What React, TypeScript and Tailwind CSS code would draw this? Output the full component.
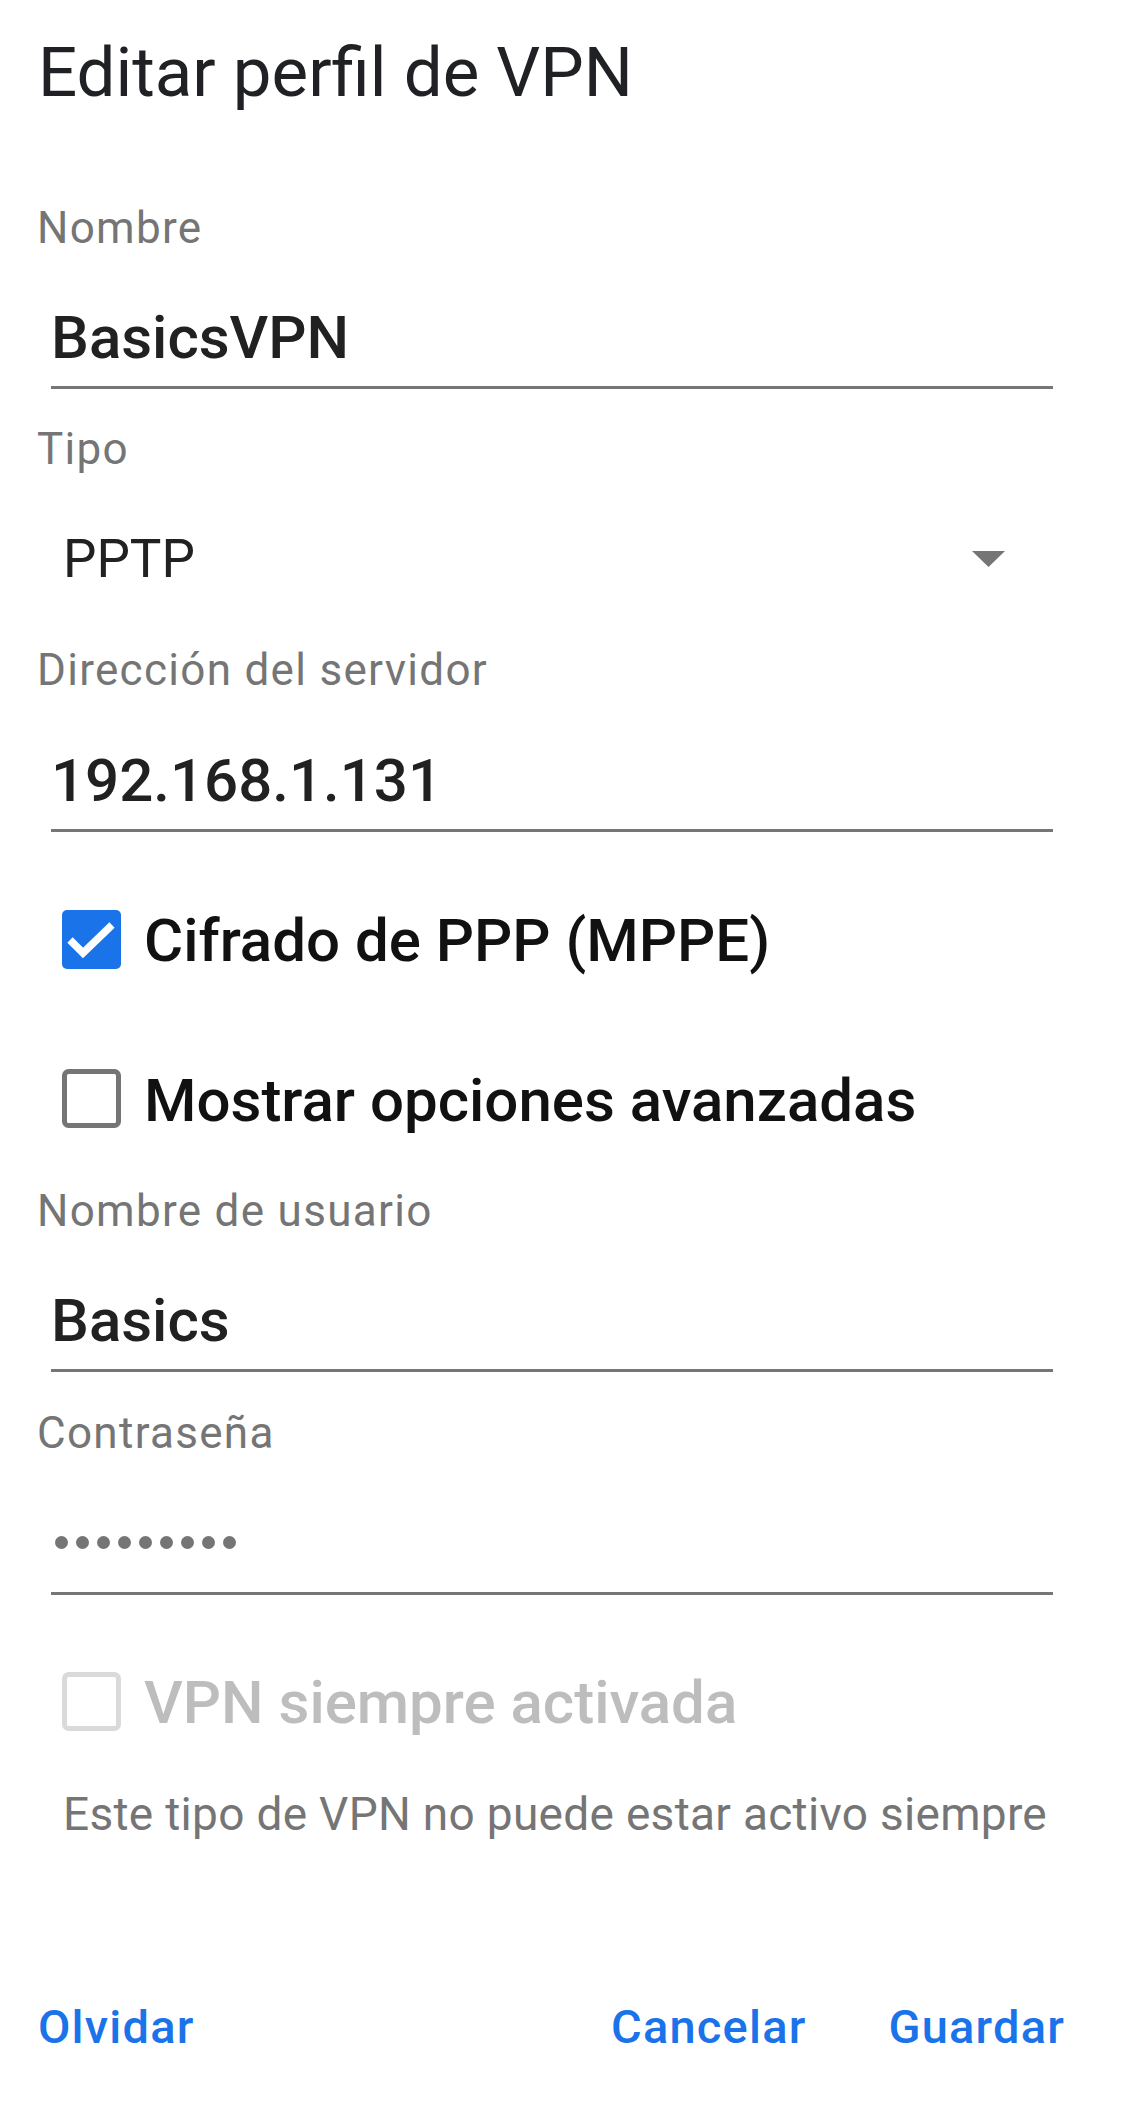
import React from "react";

const font = { fontFamily: "Roboto, 'Noto Sans', Arial, sans-serif" };

function Label({ text, mt }: { text: string; mt: string }) {
  return (
    <div className={`${mt} h-[50px] leading-[50px] pl-[37px] text-[44px] tracking-[1.3px] text-[#757575] whitespace-nowrap`}>
      {text}
    </div>
  );
}

function Field({ value, mt }: { value: string; mt: string }) {
  return (
    <div className={`${mt} ml-[51px] mr-[69px]`}>
      <div className="h-[66px] leading-[66px] text-[60px] font-medium text-[#212121] whitespace-nowrap">{value}</div>
      <div className="mt-[15px] h-[3px] bg-[#767676]" />
    </div>
  );
}

function CheckedBox() {
  return (
    <svg width="59" height="59" viewBox="0 0 59 59" className="shrink-0">
      <rect x="0" y="0" width="59" height="59" rx="5" fill="#1a73e8" />
      <polyline points="8,30 21,43 50,15" fill="none" stroke="#ffffff" strokeWidth="7.5" strokeLinecap="butt" strokeLinejoin="miter" />
    </svg>
  );
}

function EmptyBox({ color }: { color: string }) {
  return (
    <svg width="59" height="59" viewBox="0 0 59 59" className="shrink-0">
      <rect x="2.5" y="2.5" width="54" height="54" rx="4" fill="none" stroke={color} strokeWidth="5" />
    </svg>
  );
}

export default function App() {
  return (
    <div className="w-[1122px] h-[2114px] bg-white overflow-hidden" style={font}>
      <div className="mt-[33px] h-[80px] leading-[80px] pl-[38px] text-[69px] text-[#202124] whitespace-nowrap">
        Editar perfil de VPN
      </div>

      <Label text="Nombre" mt="mt-[90px]" />
      <Field value="BasicsVPN" mt="mt-[52px]" />

      <Label text="Tipo" mt="mt-[35px]" />
      <div className="mt-[55px] h-[60px] flex items-center pl-[63px] pr-[117px]">
        <div className="flex-1 leading-[60px] text-[53px] text-[#212121]">PPTP</div>
        <svg width="33" height="16" viewBox="0 0 33 16">
          <polygon points="0,0 33,0 16.5,16" fill="#757575" />
        </svg>
      </div>

      <Label text="Dirección del servidor" mt="mt-[56px]" />
      <Field value="192.168.1.131" mt="mt-[53px]" />

      <div className="mt-[77px] h-[60px] flex items-center pl-[62px] gap-[23px]">
        <CheckedBox />
        <div className="leading-[60px] pt-[4px] text-[60px] font-medium text-[#111111] whitespace-nowrap">
          Cifrado de PPP (MPPE)
        </div>
      </div>

      <div className="mt-[100px] h-[59px] flex items-center pl-[62px] gap-[23px]">
        <EmptyBox color="#757575" />
        <div className="leading-[59px] pt-[4px] text-[60px] font-medium text-[#111111] whitespace-nowrap">
          Mostrar opciones avanzadas
        </div>
      </div>

      <Label text="Nombre de usuario" mt="mt-[58px]" />
      <Field value="Basics" mt="mt-[52px]" />

      <Label text="Contraseña" mt="mt-[36px]" />
      <div className="mt-[51px] ml-[51px] mr-[69px]">
        <div className="h-[66px] flex items-center gap-[8px] pl-[4px]">
          {Array.from({ length: 9 }).map((_, i) => (
            <span key={i} className="block w-[13px] h-[13px] rounded-full bg-[#757575]" />
          ))}
        </div>
        <div className="mt-[17px] h-[3px] bg-[#767676]" />
      </div>

      <div className="mt-[77px] h-[59px] flex items-center pl-[62px] gap-[23px]">
        <EmptyBox color="#dadada" />
        <div className="leading-[59px] pt-[2px] text-[60px] font-medium text-[#bdbdbd] whitespace-nowrap">
          VPN siempre activada
        </div>
      </div>

      <div className="mt-[58px] h-[50px] leading-[50px] pl-[63px] text-[46px] tracking-[0.3px] text-[#757575] whitespace-nowrap">
        Este tipo de VPN no puede estar activo siempre
      </div>

      <div className="mt-[160px] h-[56px] flex items-center pl-[38px] pr-[57px] text-[47px] tracking-[1.2px] font-medium text-[#1a73e8]">
        <div className="flex-1 leading-[56px]">Olvidar</div>
        <div className="leading-[56px]">Cancelar</div>
        <div className="leading-[56px] ml-[82px]">Guardar</div>
      </div>
    </div>
  );
}
